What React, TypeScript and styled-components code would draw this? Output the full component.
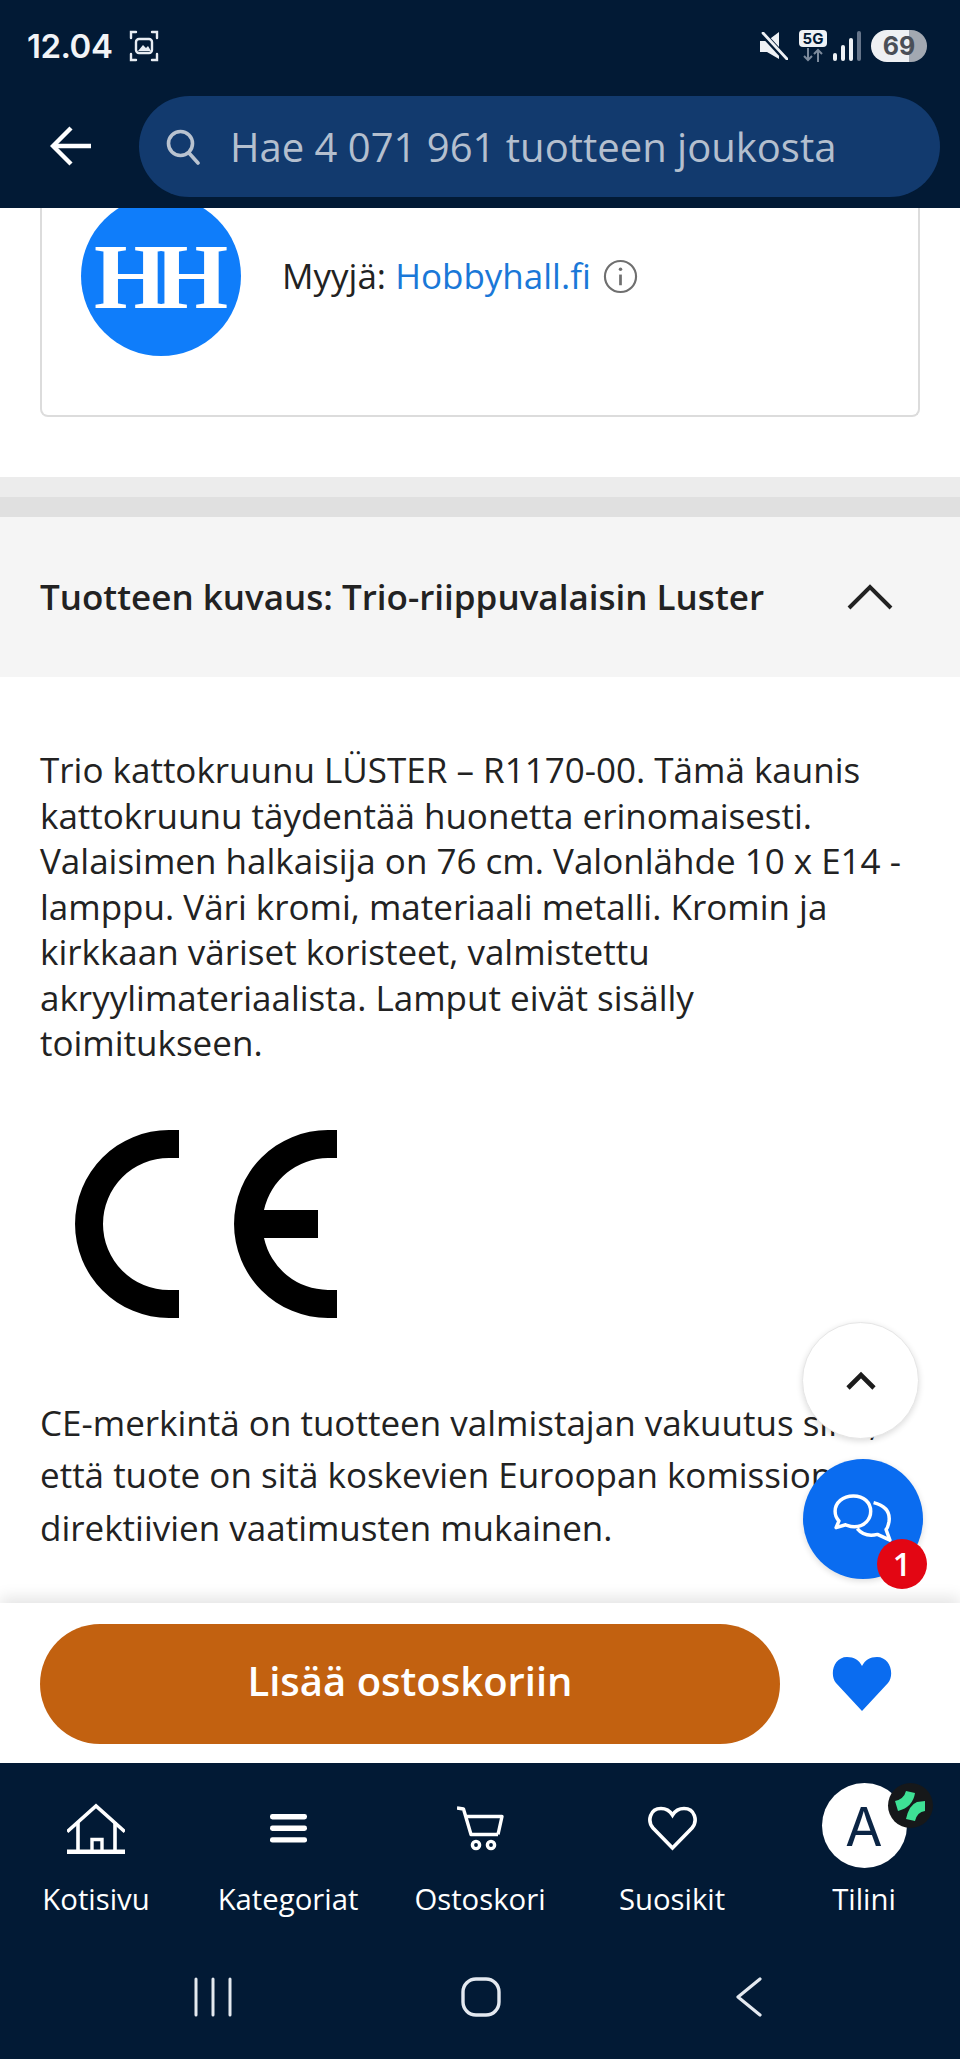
import React from 'react'
import styled, { createGlobalStyle } from 'styled-components'

const GlobalStyle = createGlobalStyle`
  html, body {
    margin: 0;
    padding: 0;
    background: #fff;
  }
  * { box-sizing: border-box; }
`

const NAV_ITEMS = [
  { label: 'Kotisivu', icon: <HomeIcon /> },
  { label: 'Kategoriat', icon: <MenuIcon /> },
  { label: 'Ostoskori', icon: <CartIcon /> },
  { label: 'Suosikit', icon: <HeartOutlineIcon /> },
]

function HomeIcon() {
  return (
    <svg width="58" height="51" viewBox="0 0 58 51" fill="none" stroke="#fff" strokeWidth="3.6">
      <path d="M1.5 27.5 L29 3 L56.5 27.5" strokeLinecap="square" />
      <path d="M11 19 V47 M48 19 V47" />
      <path d="M25 47 V36.5 H35 V47" strokeWidth="3.4" />
      <path d="M0 48.7 H58" strokeWidth="4.6" />
    </svg>
  )
}

function MenuIcon() {
  return (
    <svg width="37" height="29" viewBox="0 0 37 29" fill="#fff">
      <rect x="0" y="0" width="37" height="5.4" rx="2.4" />
      <rect x="0" y="11.6" width="37" height="5.4" rx="2.4" />
      <rect x="0" y="23.2" width="37" height="5.4" rx="2.4" />
    </svg>
  )
}

function CartIcon() {
  return (
    <svg width="47" height="45" viewBox="0 0 47 45" fill="none" stroke="#fff" strokeWidth="3.4">
      <path d="M0 2 L6.5 3 L14 28.5 H41" strokeLinejoin="round" />
      <path d="M8.5 10.5 H45 L41 28.5" strokeLinejoin="round" />
      <circle cx="19" cy="39" r="3.6" />
      <circle cx="34" cy="39" r="3.6" />
    </svg>
  )
}

function HeartOutlineIcon() {
  return (
    <svg width="49" height="45" viewBox="0 0 49 45" fill="none" stroke="#fff" strokeWidth="3.6">
      <path d="M24.5 42 L5 22 C-1 15 2 2.5 13 2.5 C18 2.5 22 5 24.5 9 C27 5 31 2.5 36 2.5 C47 2.5 50 15 44 22 Z" strokeLinejoin="miter" />
    </svg>
  )
}

export default function App() {
  return (
    <>
      <GlobalStyle />
      <Screen>
        <TopBar>
          <StatusBar>
            <StatusLeft>
              <Clock>12.04</Clock>
              <svg width="32" height="32" viewBox="0 0 32 32" fill="none" stroke="#e8edf3" strokeWidth="2.4" strokeLinecap="round">
                <path d="M8 2 H3 V8 M24 2 H29 V8 M8 30 H3 V24 M24 30 H29 V24" />
                <rect x="8" y="9" width="16" height="14" rx="3" />
                <path d="M10 21 L15 15 L18 18 L20 16 L23 21 Z" fill="#e8edf3" stroke="none" />
              </svg>
            </StatusLeft>
            <StatusRight>
              <svg width="28" height="28" viewBox="0 0 28 28" fill="#eef1f5">
                <path d="M0 9 H7 L19 0 V27 L7 20 H0 Z" />
                <path d="M1 0 L27 28" stroke="#021a35" strokeWidth="6" />
                <path d="M3 1 L27 27" stroke="#eef1f5" strokeWidth="2.8" strokeLinecap="round" />
              </svg>
              <NetworkBlock>
                <FiveG>5G</FiveG>
                <svg width="20" height="14" viewBox="0 0 20 14" fill="none" stroke="#7c8a9c" strokeWidth="2">
                  <path d="M5 0 V12 M1 8 L5 12 L9 8" />
                  <path d="M15 14 V2 M11 6 L15 2 L19 6" />
                </svg>
              </NetworkBlock>
              <svg width="28" height="31" viewBox="0 0 28 31">
                <rect x="0" y="22" width="4" height="8" rx="2" fill="#eef1f5" />
                <rect x="8" y="14" width="4" height="16" rx="2" fill="#eef1f5" />
                <rect x="16" y="7" width="4" height="23" rx="2" fill="#eef1f5" />
                <rect x="24" y="0" width="4" height="30" rx="2" fill="#66758a" />
              </svg>
              <Battery>69</Battery>
            </StatusRight>
          </StatusBar>
          <SearchRow>
            <BackButton>
              <svg width="42" height="40" viewBox="0 0 42 40" fill="none" stroke="#fff" strokeWidth="4.4">
                <path d="M41 20 H4" />
                <path d="M21 2 L3 20 L21 38" strokeLinejoin="miter" />
              </svg>
            </BackButton>
            <SearchPill>
              <svg width="34" height="36" viewBox="0 0 34 36" fill="none" stroke="#b9c3d0" strokeWidth="3.6">
                <circle cx="14.5" cy="14.5" r="12" />
                <path d="M23 24 L32 34" strokeLinecap="round" />
              </svg>
              <SearchText>Hae 4 071 961 tuotteen joukosta</SearchText>
            </SearchPill>
          </SearchRow>
        </TopBar>

        <Main>
          <SellerSection>
            <SellerCard>
              <SellerLogo>HH</SellerLogo>
              <SellerText>
                Myyjä: <SellerLink>Hobbyhall.fi</SellerLink>
              </SellerText>
              <svg width="35" height="35" viewBox="0 0 36 36" fill="none" stroke="#6f6f6f" strokeWidth="2.2">
                <circle cx="18" cy="18" r="16" />
                <path d="M18 16 V27" strokeWidth="2.8" />
                <circle cx="18" cy="10.5" r="1.8" fill="#6f6f6f" stroke="none" />
              </svg>
            </SellerCard>
          </SellerSection>
          <Divider />
          <AccordionHeader>
            <AccordionTitle>Tuotteen kuvaus: Trio-riippuvalaisin Luster</AccordionTitle>
            <svg width="46" height="26" viewBox="0 0 46 26" fill="none" stroke="#222" strokeWidth="4">
              <path d="M2 24 L23 3 L44 24" />
            </svg>
          </AccordionHeader>
          <Description>
            <Paragraph>
              Trio kattokruunu LÜSTER – R1170-00. Tämä kaunis kattokruunu täydentää huonetta erinomaisesti.
              Valaisimen halkaisija on 76 cm. Valonlähde 10 x E14 -lamppu. Väri kromi, materiaali metalli.
              Kromin ja kirkkaan väriset koristeet, valmistettu akryylimateriaalista. Lamput eivät sisälly
              toimitukseen.
            </Paragraph>
            <CeMark width="262" height="188" viewBox="0 0 262 188" fill="#000">
              <path d="M104 0 H94 A94 94 0 0 0 94 188 H104 V160 H94 A66 66 0 0 1 94 28 H104 Z" />
              <path d="M262 0 H253 A94 94 0 0 0 253 188 H262 V160 H253 A66 66 0 0 1 189 108 H243 V80 H189 A66 66 0 0 1 253 28 H262 Z" />
            </CeMark>
            <CeParagraph>
              CE-merkintä on tuotteen valmistajan vakuutus siitä, että tuote on sitä koskevien Euroopan
              komission direktiivien vaatimusten mukainen.
            </CeParagraph>
          </Description>
          <ScrollTopButton>
            <svg width="30" height="20" viewBox="0 0 30 20" fill="none" stroke="#1c1c1c" strokeWidth="4.6">
              <path d="M2 17 L15 4 L28 17" />
            </svg>
          </ScrollTopButton>
          <ChatButton>
            <svg width="62" height="50" viewBox="0 0 62 52" fill="none" stroke="#fff" strokeWidth="3.6" strokeLinejoin="round">
              <path d="M21 2 C10 2 2 9 2 18 C2 22 3 25 6 28 L3 35 L13 32 C16 33 18 34 22 34 C33 34 39 26 39 18 C39 9 32 2 21 2 Z" />
              <path d="M42 9 C50 11 60 16 58 29 C57 33 57 35 55 37 L59 48 L46 42 C38 44 30 42 25 36" />
            </svg>
            <ChatBadge>1</ChatBadge>
          </ChatButton>
        </Main>

        <ActionBar>
          <AddToCart>Lisää ostoskoriin</AddToCart>
          <FavoriteButton>
            <svg width="60" height="56" viewBox="0 0 60 56" fill="#0a6cf0">
              <path d="M30 55 L4 27 C-3 18 2 1 15 1 C22 1 27 4 30 10 C33 4 38 1 45 1 C58 1 63 18 56 27 Z" />
            </svg>
          </FavoriteButton>
        </ActionBar>

        <BottomNav>
          <NavGrid>
            {NAV_ITEMS.map((item) => (
              <NavItem key={item.label}>
                <NavIconBox>{item.icon}</NavIconBox>
                <NavLabel>{item.label}</NavLabel>
              </NavItem>
            ))}
            <NavItem>
              <NavIconBox>
                <Avatar>
                  A
                  <AvatarBadge>
                    <svg width="45" height="45" viewBox="0 0 45 45" fill="#3ee095">
                      <path d="M7 18 Q16 16 18 8 L27 10 Q25 24 10 28 Z" />
                      <path d="M37 18 L37 28 Q29 29 27 38 L18 36 Q21 22 29 19 Z" />
                    </svg>
                  </AvatarBadge>
                </Avatar>
              </NavIconBox>
              <NavLabel>Tilini</NavLabel>
            </NavItem>
          </NavGrid>
          <SystemNav>
            <svg width="38" height="40" viewBox="0 0 38 40" fill="none" stroke="#e4e9f0" strokeWidth="3" strokeLinecap="round">
              <path d="M2 2 V38 M19 2 V38 M36 2 V38" />
            </svg>
            <svg width="40" height="40" viewBox="0 0 40 40" fill="none" stroke="#e4e9f0" strokeWidth="3.4">
              <rect x="2" y="2" width="36" height="36" rx="13" />
            </svg>
            <svg width="26" height="40" viewBox="0 0 26 40" fill="none" stroke="#e4e9f0" strokeWidth="3.2" strokeLinecap="round" strokeLinejoin="round">
              <path d="M24 2 L2 20 L24 38" />
            </svg>
          </SystemNav>
        </BottomNav>
      </Screen>
    </>
  )
}

const Screen = styled.div`
  position: relative;
  width: 960px;
  height: 2059px;
  display: flex;
  flex-direction: column;
  overflow: hidden;
  background: #fff;
  font-family: 'Open Sans', sans-serif;
  color: #222;
`

const TopBar = styled.header`
  flex: none;
  height: 208px;
  background: #021a35;
  display: flex;
  flex-direction: column;
  z-index: 2;
`

const StatusBar = styled.div`
  height: 96px;
  padding: 30px 33px 4px 27px;
  display: flex;
  justify-content: space-between;
  align-items: flex-start;
`

const StatusLeft = styled.div`
  display: flex;
  align-items: center;
  gap: 16px;
`

const Clock = styled.span`
  font-family: Inter, sans-serif;
  font-size: 33px;
  line-height: 32px;
  font-weight: 600;
  letter-spacing: -0.5px;
  color: #f2f4f7;
`

const StatusRight = styled.div`
  display: flex;
  align-items: center;
  gap: 6px;
`

const NetworkBlock = styled.div`
  display: flex;
  flex-direction: column;
  align-items: center;
  gap: 1px;
  margin-left: 5px;
`

const FiveG = styled.span`
  width: 28px;
  height: 17px;
  border-radius: 4px;
  background: #eef1f5;
  color: #021a35;
  font-family: Inter, sans-serif;
  font-size: 15px;
  line-height: 17px;
  font-weight: 700;
  text-align: center;
`

const Battery = styled.span`
  width: 56px;
  height: 32px;
  margin-left: 4px;
  border-radius: 16px;
  background: linear-gradient(to right, #eef0f3 0 68%, #a2a8b1 68% 100%);
  color: #4a4f57;
  font-family: Inter, sans-serif;
  font-size: 25px;
  line-height: 32px;
  font-weight: 700;
  text-align: center;
`

const SearchRow = styled.div`
  display: flex;
  align-items: flex-start;
  padding-right: 20px;
`

const BackButton = styled.div`
  width: 139px;
  height: 100px;
  flex: none;
  display: flex;
  align-items: center;
  padding-left: 50px;
`

const SearchPill = styled.div`
  flex: 1;
  height: 101px;
  border-radius: 51px;
  background: #123a6e;
  display: flex;
  align-items: center;
  gap: 30px;
  padding-left: 27px;
`

const SearchText = styled.span`
  font-size: 40px;
  color: #b4bfce;
`

const Main = styled.main`
  position: relative;
  flex: 1;
  min-height: 0;
  overflow: hidden;
`

const SellerSection = styled.section`
  padding: 0 40px 60px;
  box-shadow: 0 4px 4px -4px rgba(0, 0, 0, 0.1);
`

const SellerCard = styled.div`
  height: 209px;
  border: 2px solid #dcdcdc;
  border-top: none;
  border-radius: 0 0 8px 8px;
  padding-left: 39px;
  display: flex;
  align-items: flex-start;
  gap: 12px;

  > svg {
    margin-top: 51px;
  }
`

const SellerLogo = styled.div`
  width: 160px;
  height: 160px;
  margin: -12px 29px 0 0;
  flex: none;
  border-radius: 50%;
  background: #0f7dfa;
  color: #fff;
  font-family: 'Liberation Serif', serif;
  font-weight: 700;
  font-size: 94px;
  line-height: 160px;
  letter-spacing: -12px;
  text-align: center;
  text-indent: -12px;
`

const SellerText = styled.div`
  margin-top: 44px;
  font-size: 35px;
  line-height: 48px;
  color: #222;
`

const SellerLink = styled.span`
  color: #1a78d8;
`

const Divider = styled.div`
  height: 40px;
  background: linear-gradient(to bottom, #ececec 0 50%, #e0e0e0 50% 100%);
`

const AccordionHeader = styled.div`
  height: 160px;
  background: #f5f5f5;
  display: flex;
  align-items: center;
  justify-content: space-between;
  padding: 0 67px 0 40px;
`

const AccordionTitle = styled.h2`
  margin: 0;
  font-size: 35px;
  line-height: 48px;
  font-weight: 600;
  color: #222;
`

const Description = styled.div`
  padding: 70px 40px 0;
`

const Paragraph = styled.p`
  margin: 0;
  font-size: 35px;
  line-height: 45.5px;
  color: #222;
`

const CeMark = styled.svg`
  display: block;
  margin: 64px 0 79px 35px;
`

const CeParagraph = styled.p`
  margin: 0;
  font-size: 35px;
  line-height: 52.5px;
  color: #222;
`

const ScrollTopButton = styled.div`
  position: absolute;
  left: 802px;
  top: 1114px;
  width: 117px;
  height: 117px;
  border-radius: 50%;
  background: #fff;
  border: 1px solid #e6e6e6;
  box-shadow: 0 2px 6px rgba(0, 0, 0, 0.14);
  display: flex;
  align-items: center;
  justify-content: center;
`

const ChatButton = styled.div`
  position: absolute;
  left: 803px;
  top: 1251px;
  width: 120px;
  height: 120px;
  border-radius: 50%;
  background: #0a6cf0;
  box-shadow: 0 2px 6px rgba(0, 0, 0, 0.14);
  display: flex;
  align-items: center;
  justify-content: center;
`

const ChatBadge = styled.span`
  position: absolute;
  left: 74px;
  top: 80px;
  width: 50px;
  height: 50px;
  border-radius: 50%;
  background: #e30613;
  color: #fff;
  font-size: 32px;
  line-height: 50px;
  font-weight: 600;
  text-align: center;
`

const ActionBar = styled.div`
  position: relative;
  flex: none;
  height: 160px;
  padding: 21px 0 19px 40px;
  background: #fff;
  display: flex;
  align-items: stretch;
  box-shadow: 0 -6px 14px rgba(0, 0, 0, 0.1);
  z-index: 1;
`

const AddToCart = styled.div`
  width: 740px;
  padding-bottom: 8px;
  border-radius: 60px;
  background: #c26110;
  color: #fff;
  font-size: 40px;
  font-weight: 600;
  display: flex;
  align-items: center;
  justify-content: center;
`

const FavoriteButton = styled.div`
  flex: 1;
  display: flex;
  align-items: center;
  justify-content: center;
  padding-right: 17px;
`

const BottomNav = styled.nav`
  position: relative;
  flex: none;
  height: 296px;
  background: #021a35;
  z-index: 2;
`

const NavGrid = styled.div`
  display: grid;
  grid-template-columns: repeat(5, 192px);
  padding-top: 20px;
`

const NavItem = styled.div`
  display: flex;
  flex-direction: column;
  align-items: center;
`

const NavIconBox = styled.div`
  height: 85px;
  display: flex;
  align-items: center;
  justify-content: center;

  > svg {
    margin-top: 6px;
  }
`

const NavLabel = styled.span`
  margin-top: 11px;
  font-size: 29.3px;
  line-height: 40px;
  color: #fff;
`

const Avatar = styled.div`
  position: relative;
  width: 85px;
  height: 85px;
  border-radius: 50%;
  background: #fff;
  color: #0b2545;
  font-family: Inter, sans-serif;
  font-size: 54px;
  line-height: 87px;
  text-align: center;
`

const AvatarBadge = styled.span`
  position: absolute;
  left: 66px;
  top: 0;
  width: 45px;
  height: 45px;
  border-radius: 50%;
  background: #16181a;
  display: flex;
`

const SystemNav = styled.div`
  display: grid;
  grid-template-columns: repeat(3, 268px);
  justify-items: center;
  padding-left: 79px;
  margin-top: 58px;
`
